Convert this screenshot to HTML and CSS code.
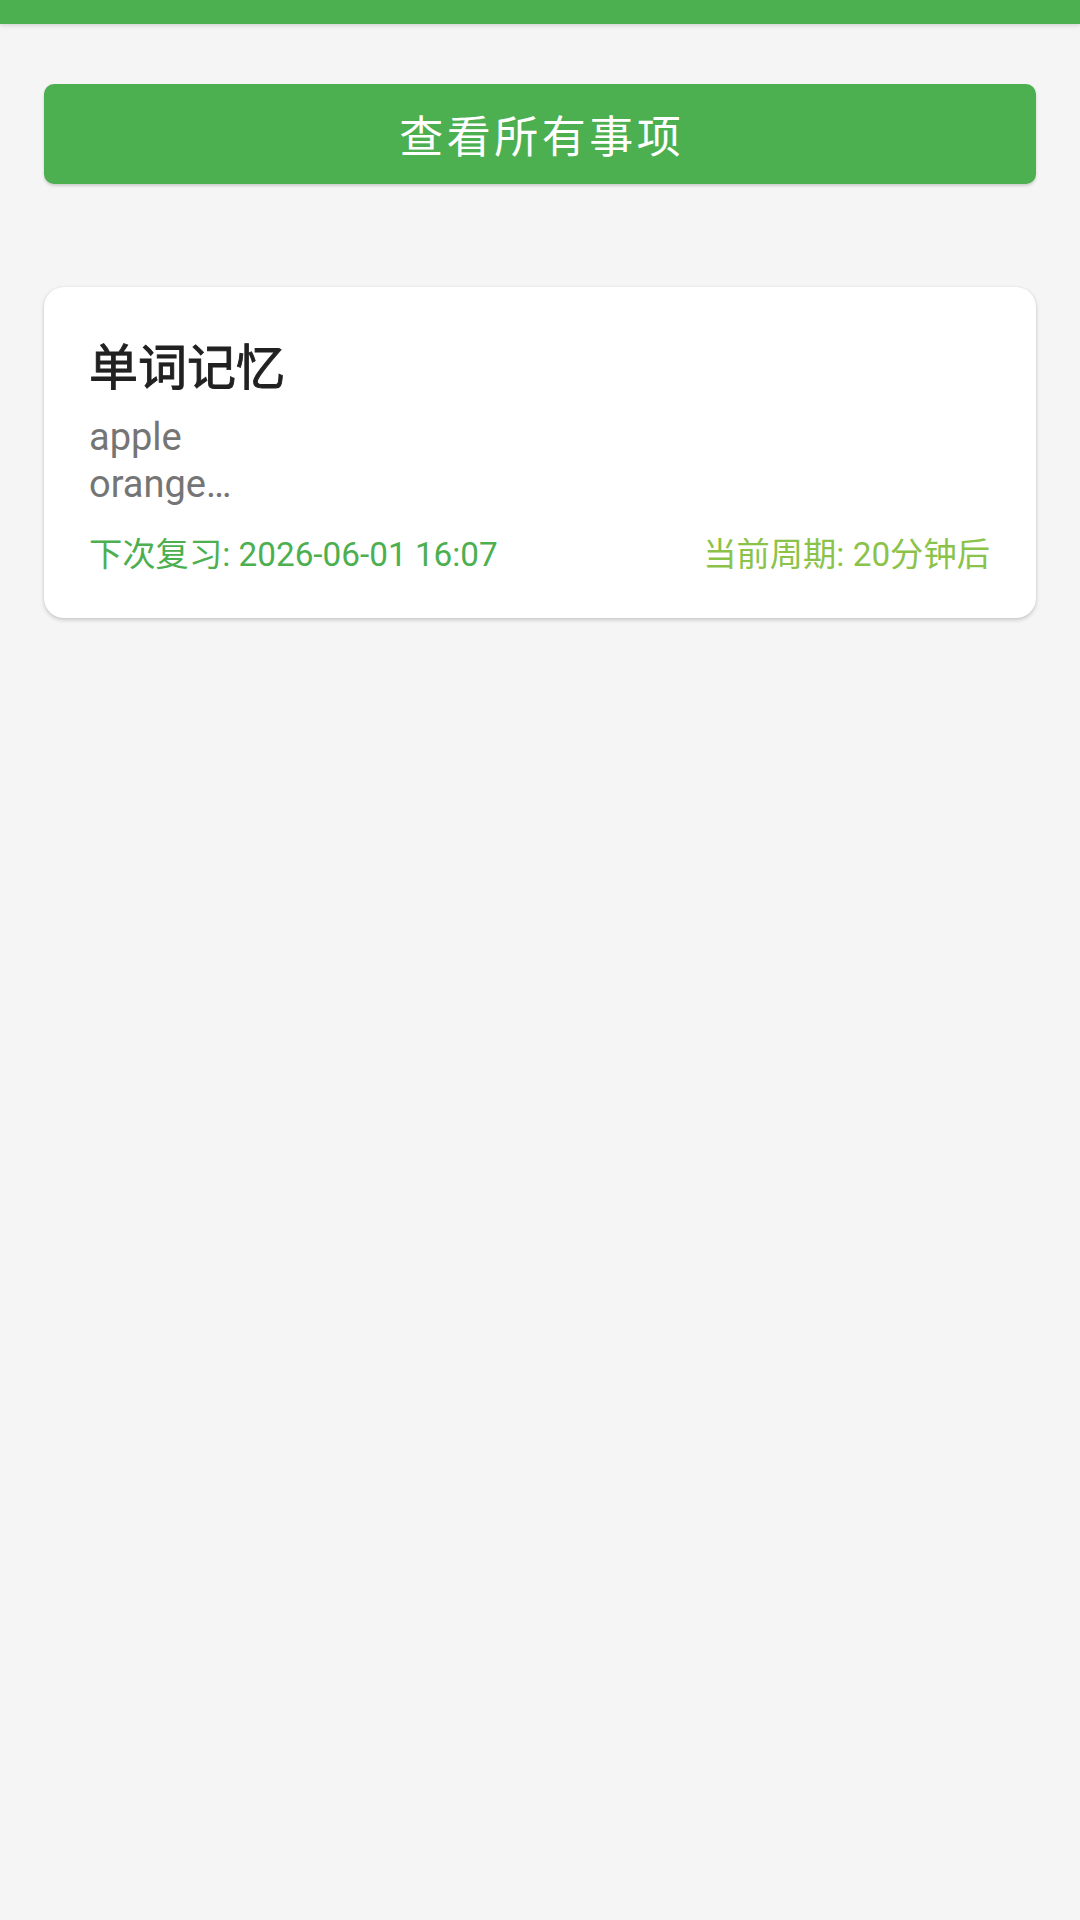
FILE: index.html
```html
<!DOCTYPE html>
<html lang="zh-CN">
<head>
<meta charset="utf-8">
<title>事项</title>
<link rel="stylesheet" href="styles.css">
</head>
<body>
<div class="topbar"></div>
<main class="content">
  <button class="all-btn">查看所有事项</button>
  <section class="card">
    <h2 class="card-title">单词记忆</h2>
    <p class="card-desc">apple<br>orange…</p>
    <div class="card-footer">
      <span class="next">下次复习: 2026-06-01 16:07</span>
      <span class="cycle">当前周期: 20分钟后</span>
    </div>
  </section>
</main>
</body>
</html>
```
FILE: styles.css
```css
html, body {
  margin: 0;
  padding: 0;
}
body {
  background: #f5f5f5;
  font-family: "Roboto", "Noto Sans CJK SC", sans-serif;
  width: 1080px;
  min-height: 1920px;
}
.topbar {
  height: 24px;
  background: #4caf50;
  box-shadow: 0 2px 4px rgba(0, 0, 0, 0.12);
}
.content {
  padding: 60px 44px 0;
  display: flex;
  flex-direction: column;
}
.all-btn {
  height: 100px;
  border: none;
  border-radius: 10px;
  background: #4caf50;
  color: #ffffff;
  font-family: "Noto Sans CJK SC", sans-serif;
  font-size: 44px;
  letter-spacing: 3.5px;
  padding: 0 0 0 3.5px;
  box-shadow: 0 2px 3px rgba(0, 0, 0, 0.16);
}
.card {
  margin-top: 103px;
  height: 331px;
  box-sizing: border-box;
  padding: 47px 46px 43px 45px;
  background: #ffffff;
  border-radius: 20px;
  box-shadow: 0 2px 4px rgba(0, 0, 0, 0.18), 0 0 2px rgba(0, 0, 0, 0.08);
  display: flex;
  flex-direction: column;
}
.card-title {
  margin: 0;
  font-family: "Noto Sans CJK SC", sans-serif;
  font-size: 49px;
  font-weight: 400;
  -webkit-text-stroke: 0.9px #212121;
  line-height: 60px;
  color: #212121;
}
.card-desc {
  margin: 20px 0 0;
  font-size: 38px;
  line-height: 47px;
  color: #757575;
}
.card-footer {
  margin-top: 27px;
  display: flex;
  justify-content: space-between;
  font-size: 33.3px;
  line-height: 40px;
}
.next {
  color: #4caf50;
}
.cycle {
  color: #8bc34a;
}
```
